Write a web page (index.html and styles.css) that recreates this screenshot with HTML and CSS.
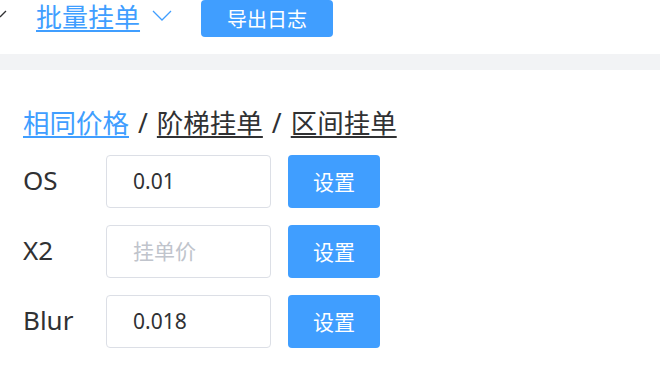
FILE: index.html
```html
<!DOCTYPE html>
<html lang="zh-CN">
<head>
    <meta charset="UTF-8">
    <meta name="viewport" content="width=device-width, initial-scale=1.0">
    <title>批量挂单</title>
    <link rel="stylesheet" href="styles.css">
</head>
<body>

<header class="topbar">
    <svg class="prev-arrow" width="8" height="8" viewBox="0 0 8 8">
        <polyline points="0,7 6,1" fill="none" stroke="#303133" stroke-width="1.3"/>
    </svg>
    <a class="menu-link" href="#batch">批量挂单</a>
    <svg class="menu-arrow" width="20" height="11" viewBox="0 0 20 11">
        <polyline points="1,1 10,10 19,1" fill="none" stroke="#409eff" stroke-width="1.3"/>
    </svg>
    <button class="btn btn-export">导出日志</button>
</header>

<div class="divider"></div>

<main class="content">
    <div class="tabs">
        <a href="#same" class="tab active">相同价格</a>
        <span class="sep">/</span>
        <a href="#step" class="tab">阶梯挂单</a>
        <span class="sep">/</span>
        <a href="#range" class="tab">区间挂单</a>
    </div>

    <div class="row">
        <label class="row-label" for="p-os">OS</label>
        <input class="row-input" id="p-os" type="text" value="0.01" placeholder="挂单价">
        <button class="btn btn-set">设置</button>
    </div>
    <div class="row">
        <label class="row-label" for="p-x2">X2</label>
        <input class="row-input" id="p-x2" type="text" placeholder="挂单价">
        <button class="btn btn-set">设置</button>
    </div>
    <div class="row">
        <label class="row-label" for="p-blur">Blur</label>
        <input class="row-input" id="p-blur" type="text" value="0.018" placeholder="挂单价">
        <button class="btn btn-set">设置</button>
    </div>
</main>

</body>
</html>
```

FILE: styles.css
```css
body {
    margin: 0;
    padding: 0;
    background-color: #ffffff;
    color: #303133;
    font-family: "Noto Sans", "Noto Sans CJK SC", sans-serif;
}
.topbar {
    display: flex;
    align-items: flex-start;
    height: 54px;
}
.prev-arrow {
    margin-top: 10px;
}
.menu-link {
    margin-left: 28px;
    font-size: 26px;
    line-height: 34px;
    color: #409eff;
    text-decoration: underline;
    text-underline-offset: 3px;
}
.menu-link:hover {
    color: #66b1ff;
}
.menu-arrow {
    margin-left: 12px;
    margin-top: 10px;
}
.btn {
    border: none;
    border-radius: 4px;
    background-color: #409eff;
    color: #ffffff;
    font-family: "Noto Sans", "Noto Sans CJK SC", sans-serif;
    cursor: pointer;
    padding: 0;
}
.btn:hover {
    background-color: #66b1ff;
}
.btn-export {
    margin-left: 29px;
    width: 132px;
    height: 37px;
    font-size: 20px;
}
.divider {
    height: 16px;
    background-color: #f2f3f5;
}
.content {
    padding: 35px 0 0 23px;
}
.tabs {
    display: flex;
    align-items: center;
    font-size: 26.5px;
    line-height: 36px;
    margin-bottom: 14px;
}
.tab {
    color: #303133;
    text-decoration: underline;
    text-underline-offset: 3px;
}
.tab.active {
    color: #409eff;
}
.sep {
    margin: 0 9px;
}
.row {
    display: flex;
    align-items: center;
    height: 53px;
    margin-bottom: 17px;
}
.row-label {
    width: 83px;
    font-size: 26px;
    padding-bottom: 3px;
}
.row-input {
    box-sizing: border-box;
    width: 165px;
    height: 53px;
    padding: 0 26px 2px;
    border: 1px solid #dcdfe6;
    border-radius: 4px;
    font-family: "Noto Sans", "Noto Sans CJK SC", sans-serif;
    font-size: 21px;
    color: #303133;
    outline: none;
}
.row-input::placeholder {
    color: #c0c4cc;
}
.btn-set {
    margin-left: 17px;
    width: 92px;
    height: 53px;
    font-size: 21px;
    padding-bottom: 2px;
}
```
